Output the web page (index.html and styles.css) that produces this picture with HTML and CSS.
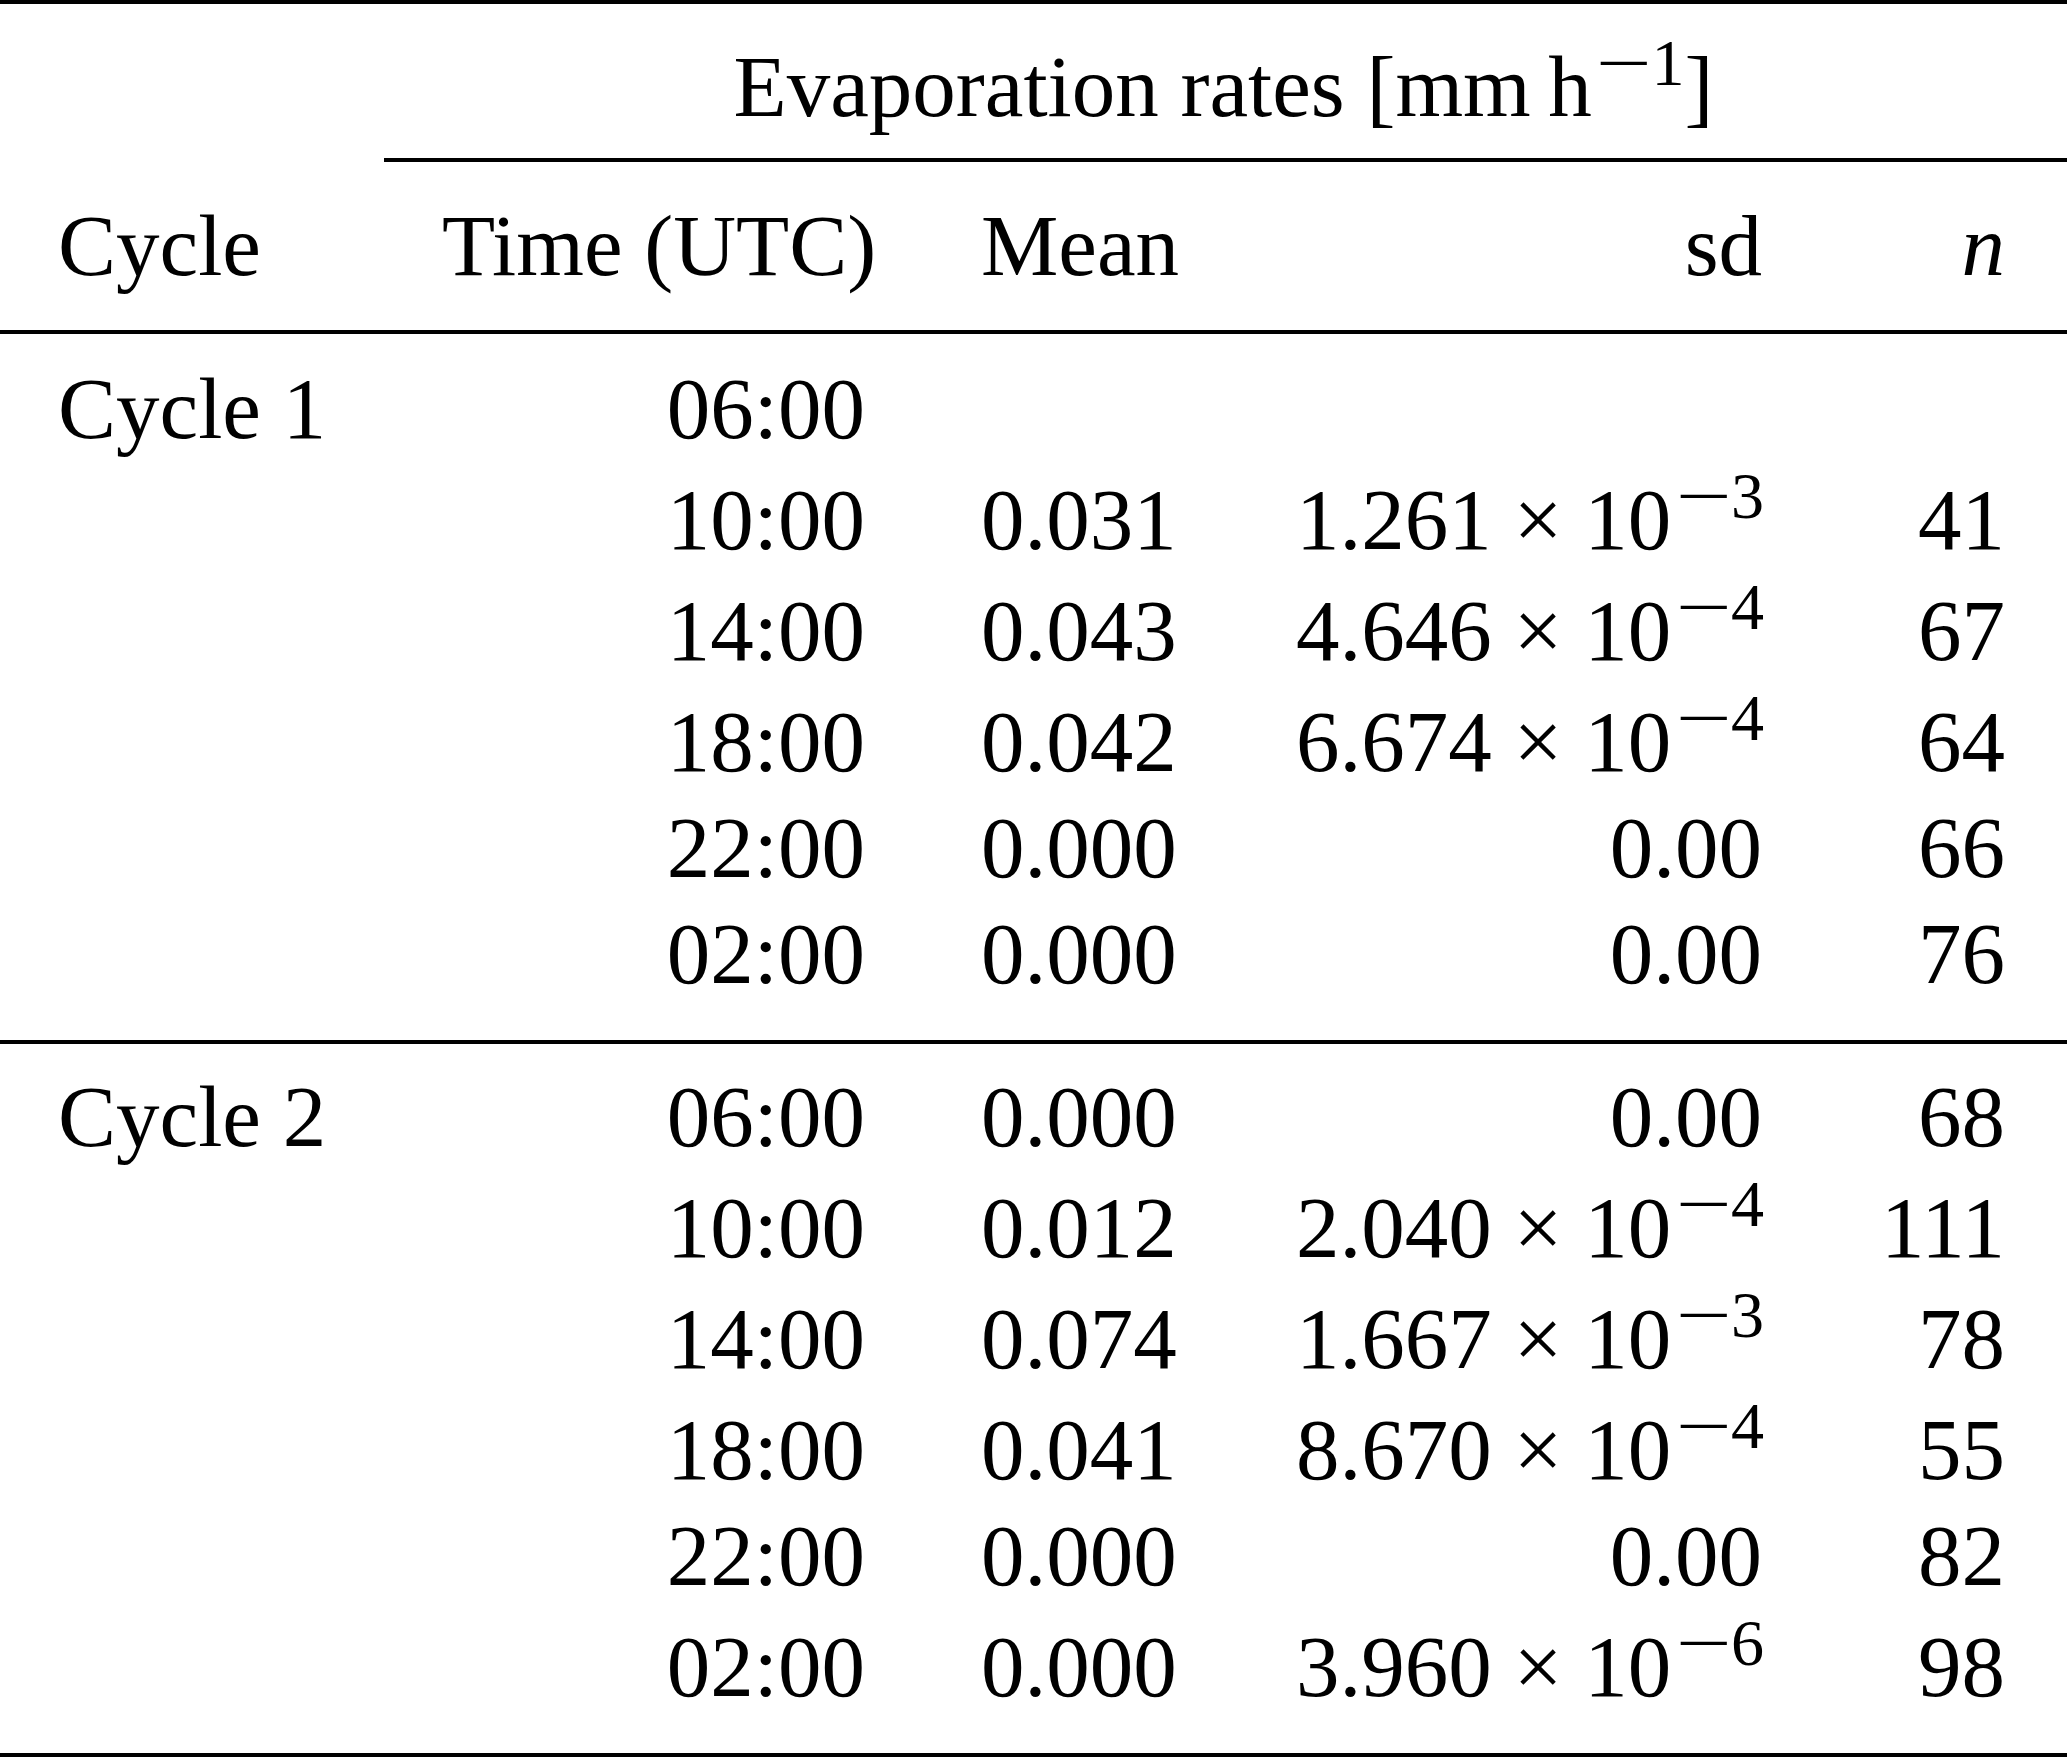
FILE: index.html
```html
<!DOCTYPE html>
<html lang="en">
<head>
<meta charset="utf-8">
<title>Evaporation rates</title>
<link rel="stylesheet" href="styles.css">
</head>
<body>
<table class="evap">
  <colgroup>
    <col class="c-cycle"><col class="c-time"><col class="c-mean"><col class="c-sd"><col class="c-n">
  </colgroup>
  <thead>
    <tr class="r-span">
      <th class="blank"></th>
      <th class="span" colspan="4">Evaporation rates [mm&thinsp;h<sup><span class="minus">−</span>1</sup>]</th>
    </tr>
    <tr class="r-head">
      <th class="l">Cycle</th>
      <th class="r">Time (UTC)</th>
      <th class="l">Mean</th>
      <th class="r">sd</th>
      <th class="r"><i>n</i></th>
    </tr>
  </thead>
  <tbody class="cycle">
    <tr class="first"><td class="l">Cycle 1</td><td class="r">06:00</td><td class="l"></td><td class="r"></td><td class="r"></td></tr>
    <tr class="sup-row"><td></td><td class="r">10:00</td><td class="l">0.031</td><td class="r">1.261<span class="times">×</span>10<sup><span class="minus">−</span>3</sup></td><td class="r">41</td></tr>
    <tr class="sup-row"><td></td><td class="r">14:00</td><td class="l">0.043</td><td class="r">4.646<span class="times">×</span>10<sup><span class="minus">−</span>4</sup></td><td class="r">67</td></tr>
    <tr class="sup-row"><td></td><td class="r">18:00</td><td class="l">0.042</td><td class="r">6.674<span class="times">×</span>10<sup><span class="minus">−</span>4</sup></td><td class="r">64</td></tr>
    <tr><td></td><td class="r">22:00</td><td class="l">0.000</td><td class="r">0.00</td><td class="r">66</td></tr>
    <tr class="last"><td></td><td class="r">02:00</td><td class="l">0.000</td><td class="r">0.00</td><td class="r">76</td></tr>
  </tbody>
  <tbody class="cycle second">
    <tr class="first"><td class="l">Cycle 2</td><td class="r">06:00</td><td class="l">0.000</td><td class="r">0.00</td><td class="r">68</td></tr>
    <tr class="sup-row"><td></td><td class="r">10:00</td><td class="l">0.012</td><td class="r">2.040<span class="times">×</span>10<sup><span class="minus">−</span>4</sup></td><td class="r">111</td></tr>
    <tr class="sup-row"><td></td><td class="r">14:00</td><td class="l">0.074</td><td class="r">1.667<span class="times">×</span>10<sup><span class="minus">−</span>3</sup></td><td class="r">78</td></tr>
    <tr class="sup-row"><td></td><td class="r">18:00</td><td class="l">0.041</td><td class="r">8.670<span class="times">×</span>10<sup><span class="minus">−</span>4</sup></td><td class="r">55</td></tr>
    <tr><td></td><td class="r">22:00</td><td class="l">0.000</td><td class="r">0.00</td><td class="r">82</td></tr>
    <tr class="sup-row last"><td></td><td class="r">02:00</td><td class="l">0.000</td><td class="r">3.960<span class="times">×</span>10<sup><span class="minus">−</span>6</sup></td><td class="r">98</td></tr>
  </tbody>
</table>
</body>
</html>
```

FILE: styles.css
```css
html, body {
  margin: 0;
  padding: 0;
  background: #ffffff;
}

body {
  color: #000000;
  font-family: "Liberation Serif", "Times New Roman", serif;
  font-size: 87px;
}

.evap {
  width: 2067px;
  table-layout: fixed;
  border-collapse: separate;
  border-spacing: 0;
  border-top: 4px solid #000;
  border-bottom: 4px solid #000;
}

.c-cycle { width: 384px; }
.c-time  { width: 539px; }
.c-mean  { width: 315px; }
.c-sd    { width: 582px; }
.c-n     { width: 247px; }

.evap th,
.evap td {
  font-weight: normal;
  line-height: 106px;
  padding: 0 58px;
  white-space: nowrap;
  vertical-align: top;
}

.evap .l { text-align: left; }
.evap .r { text-align: right; }

.evap td:last-child,
.evap th:last-child { padding-right: 62px; }

/* spanner row */
.r-span th {
  padding-top: 30px;
  padding-bottom: 18px;
}
.r-span .span {
  text-align: center;
  border-bottom: 4px solid #000;
  padding-left: 58px;
  padding-right: 58px;
}

/* column header row */
.r-head th {
  padding-top: 31px;
  padding-bottom: 31px;
  border-bottom: 4px solid #000;
}

/* body rows */
.cycle .first td { padding-top: 22px; }
.cycle .sup-row td { padding-top: 5px; }
.cycle .last td { padding-bottom: 33px; }
.cycle.second .first td {
  border-top: 4px solid #000;
  padding-top: 20px;
}

sup {
  font-size: 0.76em;
  line-height: 0;
  vertical-align: 31px;
}

.minus {
  display: inline-block;
  transform: scaleX(1.5);
  margin: 0 0.14em 0 0.2em;
}

.times {
  margin: 0 0.25em;
}
```
